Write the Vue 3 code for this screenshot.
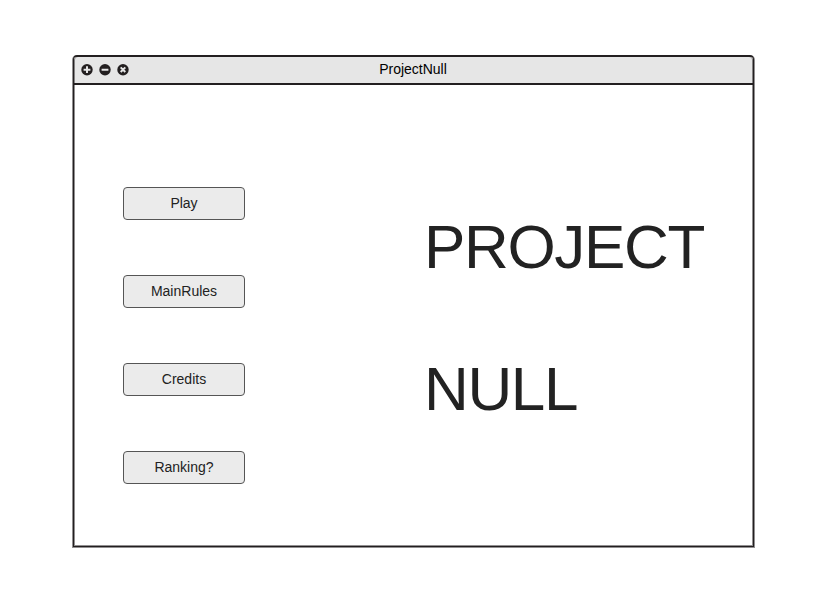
<script setup>
const buttons = ['Play', 'MainRules', 'Credits', 'Ranking?']
</script>

<template>
  <main class="page">
    <section class="window">
      <header class="titlebar">
        <svg class="controls" width="50" height="14" viewBox="0 0 50 14">
          <g fill="#231f20">
            <circle cx="7" cy="6.7" r="5.7" />
            <circle cx="25" cy="6.7" r="5.7" />
            <circle cx="43" cy="6.7" r="5.7" />
          </g>
          <g stroke="#e6e6e6" stroke-width="2">
            <path d="M3.6 6.7H10.4M7 3.3V10.1M21.6 6.7H28.4M40.7 4.4L45.3 9M45.3 4.4L40.7 9" />
          </g>
        </svg>
        <span class="title">ProjectNull</span>
      </header>
      <div class="content">
        <nav class="menu">
          <button v-for="b in buttons" :key="b" class="btn">{{ b }}</button>
        </nav>
        <h1 class="heading"><span>PROJECT</span><span>NULL</span></h1>
      </div>
    </section>
  </main>
</template>

<style>
body { background: #fff; }
</style>

<style scoped>
.page {
  box-sizing: border-box;
  width: 828px;
  height: 601px;
  padding: 55px 74px 54px 73px;
  font-family: "Liberation Sans", Arial, sans-serif;
}
.window {
  box-sizing: border-box;
  width: 681px;
  height: 492px;
  border: 1px solid #231f20;
  border-top-width: 2px;
  border-radius: 4px 4px 0 0;
  box-shadow: 0 1px 0 0 #918f90, -1px 1px 0 0 #918f90, 1px 1px 0 0 #918f90, inset 0 0 0 1px #918f90;
}
.titlebar {
  box-sizing: border-box;
  display: grid;
  grid-template-columns: 60px 1fr 60px;
  align-items: center;
  height: 28px;
  padding: 0 7px 0 6px;
  background: #e6e6e6;
  border-bottom: 2px solid #231f20;
  border-radius: 3px 3px 0 0;
  box-shadow: inset 1px 0 #848283, inset -1px 0 #848283;
}
.controls { display: block; }
.title {
  padding-bottom: 2px;
  text-align: center;
  font-size: 14px;
  line-height: 16px;
  color: #000;
}
.content {
  display: flex;
  padding: 102px 0 0 49px;
}
.menu {
  display: flex;
  flex-direction: column;
  gap: 55px;
}
.btn {
  box-sizing: border-box;
  width: 122px;
  height: 33px;
  padding: 0 0 1px;
  border: 1px solid #555;
  border-radius: 4px;
  background: #ebebeb;
  color: #222;
  font: 14px/16px "Liberation Sans", Arial, sans-serif;
}
.heading {
  display: flex;
  flex-direction: column;
  margin: 24px 0 0 179px;
  font-size: 62px;
  font-weight: 400;
  line-height: 71px;
  gap: 71px;
  letter-spacing: -1.35px;
  color: #222;
}
</style>
